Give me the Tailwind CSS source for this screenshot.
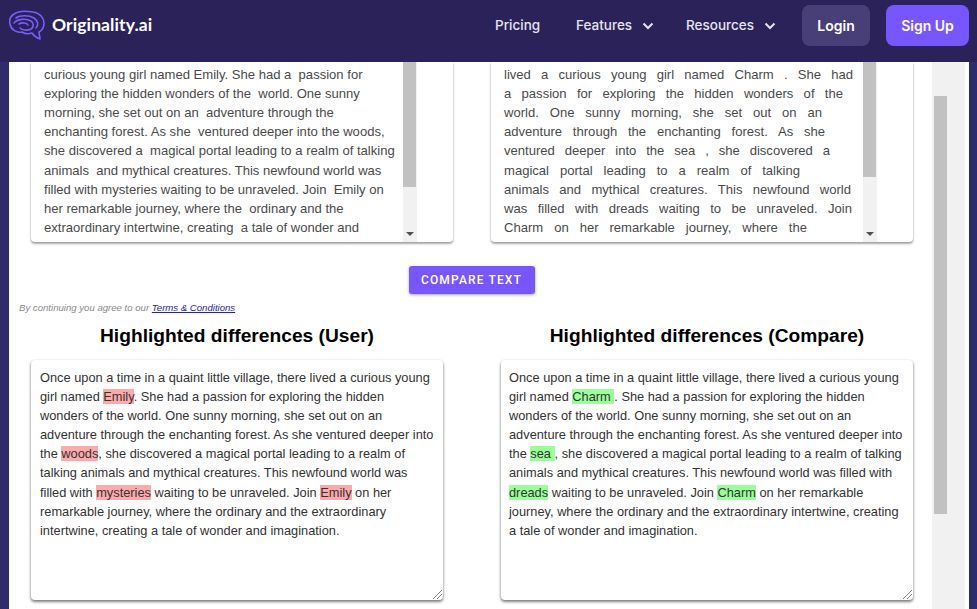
<!DOCTYPE html>
<html lang="en">
<head>
    <meta charset="UTF-8">
    <title>Originality.ai - Text Compare</title>
    <script src="https://cdn.jsdelivr.net/npm/@tailwindcss/browser@4"></script>
</head>
<body class="bg-[#302a6f] h-[609px] overflow-hidden font-['Liberation_Sans',sans-serif]">
    <!-- Nav -->
    <header class="h-[62px] bg-[#2a2258] flex items-start text-white">
        <div class="flex items-center ml-[9px] mt-[10px] gap-[7px] h-[30px]">
            <svg class="w-[36px] h-[30px]" viewBox="0 0 36 30" fill="none" stroke="#7b5cff" stroke-width="1.6" stroke-linecap="round" stroke-linejoin="round">
                <path d="M5 4C9 1 18 1 24 2C31 3 35 8 35 13C35 18 32 21 30 22C30 24 31 27 31 29C28 28 25 26 23 23C20 24 16 24 13 22C8 23 2 20 1 14C0 10 2 6 5 4Z"/>
                <path d="M7 8C11 5 20 5 25 8C29 11 30 15 27 18"/>
                <path d="M5 13C8 9 17 8 22 11C25 13 25 17 22 19C18 21 13 20 11 18"/>
                <path d="M10 14C13 12 18 13 19 15"/>
            </svg>
            <span class="font-['Lato',sans-serif] font-bold text-[17.5px] tracking-[0.1px]">Originality.ai</span>
        </div>
        <nav class="ml-auto flex items-center h-[41px] mt-[5px] text-[13.5px] font-['Inter',sans-serif] font-medium text-[#e6e4f2] mr-[8px]">
            <a class="w-[81px]">Pricing</a>
            <a class="w-[110px] flex items-center">Features
                <svg class="w-[12px] h-[8px] ml-[10px]" viewBox="0 0 12 8" fill="none" stroke="currentColor" stroke-width="2"><path d="M1.5 1.5L6 6L10.5 1.5"/></svg>
            </a>
            <a class="w-[116px] flex items-center">Resources
                <svg class="w-[12px] h-[8px] ml-[10px]" viewBox="0 0 12 8" fill="none" stroke="currentColor" stroke-width="2"><path d="M1.5 1.5L6 6L10.5 1.5"/></svg>
            </a>
            <button class="w-[68px] h-[41px] pb-[1px] rounded-[8px] bg-[#483f78] text-white font-semibold text-[14px] mr-[16px]">Login</button>
            <button class="w-[83px] h-[41px] pb-[1px] rounded-[8px] bg-[#7856ff] text-white font-semibold text-[14px]">Sign Up</button>
        </nav>
    </header>

    <div class="flex ml-[9px] w-[960px] h-[547px]">
        <main class="w-[923px] bg-white overflow-hidden">
            <!-- Input boxes -->
            <div class="flex pl-[22px] gap-[38px]">
                <div class="w-[422px] h-[180px] rounded-b-[4px] bg-white shadow-[0_1px_3px_rgba(0,0,0,0.2),0_2px_2px_rgba(0,0,0,0.25)] flex overflow-hidden pl-[13px]">
                    <div class="w-[359px] -mt-[16.6px] text-[13.07px] leading-[19.2px] text-[#4a4a4a] whitespace-nowrap">
                        <div>Once upon a time in a quaint little village, there lived a</div>
                        <div>curious young girl named Emily. She had a&nbsp; passion for</div>
                        <div>exploring the hidden wonders of the&nbsp; world. One sunny</div>
                        <div>morning, she set out on an&nbsp; adventure through the</div>
                        <div>enchanting forest. As she&nbsp; ventured deeper into the woods,</div>
                        <div>she discovered a&nbsp; magical portal leading to a realm of talking</div>
                        <div>animals&nbsp; and mythical creatures. This newfound world was</div>
                        <div>filled with mysteries waiting to be unraveled. Join&nbsp; Emily on</div>
                        <div>her remarkable journey, where the&nbsp; ordinary and the</div>
                        <div>extraordinary intertwine, creating&nbsp; a tale of wonder and</div>
                    </div>
                    <div class="w-[14px] bg-[#f1f1f1] flex flex-col">
                        <div class="w-[13px] h-[125px] bg-[#c1c1c1]"></div>
                        <div class="mt-auto mb-[6px] mx-auto w-0 h-0 border-x-[4px] border-x-transparent border-t-[4px] border-t-[#505050]"></div>
                    </div>
                </div>
                <div class="w-[422px] h-[180px] rounded-b-[4px] bg-white shadow-[0_1px_3px_rgba(0,0,0,0.2),0_2px_2px_rgba(0,0,0,0.25)] flex overflow-hidden pl-[13px]">
                    <div class="w-[359px] -mt-[16.6px] text-[13.07px] leading-[19.2px] text-[#4a4a4a] whitespace-nowrap [&>div]:[text-align-last:justify]">
                        <div class="w-[349px]">Once upon a time in a quaint little village, there</div>
                        <div class="w-[349px]">lived a curious young girl named Charm . She had</div>
                        <div class="w-[339px]">a passion for exploring the hidden wonders of the</div>
                        <div class="w-[318px]">world. One sunny morning, she set out on an</div>
                        <div class="w-[321px]">adventure through the enchanting forest. As she</div>
                        <div class="w-[326px]">ventured deeper into the sea , she discovered a</div>
                        <div class="w-[296px]">magical portal leading to a realm of talking</div>
                        <div class="w-[347px]">animals and mythical creatures. This newfound world</div>
                        <div class="w-[348px]">was filled with dreads waiting to be unraveled. Join</div>
                        <div class="w-[303px]">Charm on her remarkable journey, where the</div>
                    </div>
                    <div class="w-[14px] bg-[#f1f1f1] flex flex-col">
                        <div class="w-[13px] h-[115px] bg-[#c1c1c1]"></div>
                        <div class="mt-auto mb-[6px] mx-auto w-0 h-0 border-x-[4px] border-x-transparent border-t-[4px] border-t-[#505050]"></div>
                    </div>
                </div>
            </div>

            <div class="flex justify-center mt-[24px] pl-[2px]">
                <button class="w-[126px] h-[28px] rounded-[3px] bg-[#7856ff] text-white text-[12px] font-['Roboto',sans-serif] font-medium tracking-[1.15px] shadow-[0_1px_3px_rgba(0,0,0,0.35)]">COMPARE TEXT</button>
            </div>
            <p class="mt-[8px] ml-[10px] text-[9.6px] leading-[12px] italic text-[#8a8a8a]">By continuing you agree to our <a class="text-[#2222bb] underline">Terms &amp; Conditions</a></p>

            <!-- Results -->
            <div class="flex mt-[10px] pl-[22px] gap-[58px]">
                <section class="w-[412px]">
                    <h2 class="text-center text-[19.2px] leading-[24px] font-bold text-black">Highlighted differences (User)</h2>
                    <div class="relative mt-[12px] h-[240px] rounded-[4px] bg-white shadow-[0_1px_3px_rgba(0,0,0,0.25),0_2px_3px_rgba(0,0,0,0.4)] pt-[8px] pl-[9px] text-[12.8px] leading-[19.1px] text-[#333] whitespace-nowrap">
                        <div>Once upon a time in a quaint little village, there lived a curious young</div>
                        <div>girl named <mark class="bg-[#ffaaaa] text-[#333]">Emily</mark>. She had a passion for exploring the hidden</div>
                        <div>wonders of the world. One sunny morning, she set out on an</div>
                        <div>adventure through the enchanting forest. As she ventured deeper into</div>
                        <div>the <mark class="bg-[#ffaaaa] text-[#333]">woods</mark>, she discovered a magical portal leading to a realm of</div>
                        <div>talking animals and mythical creatures. This newfound world was</div>
                        <div>filled with <mark class="bg-[#ffaaaa] text-[#333]">mysteries</mark> waiting to be unraveled. Join <mark class="bg-[#ffaaaa] text-[#333]">Emily</mark> on her</div>
                        <div>remarkable journey, where the ordinary and the extraordinary</div>
                        <div>intertwine, creating a tale of wonder and imagination.</div>
                        <svg class="absolute right-[1px] bottom-[1px] w-[9px] h-[9px]" viewBox="0 0 9 9" stroke="#666" stroke-width="0.8"><path d="M0 9L9 0M4 9L9 4"/></svg>
                    </div>
                </section>
                <section class="w-[412px]">
                    <h2 class="text-center text-[19.2px] leading-[24px] font-bold text-black">Highlighted differences (Compare)</h2>
                    <div class="relative mt-[12px] h-[240px] rounded-[4px] bg-white shadow-[0_1px_3px_rgba(0,0,0,0.25),0_2px_3px_rgba(0,0,0,0.4)] pt-[8px] pl-[8px] text-[12.8px] leading-[19.1px] text-[#333] whitespace-nowrap">
                        <div>Once upon a time in a quaint little village, there lived a curious young</div>
                        <div>girl named <mark class="bg-[#99ff99] text-[#333]">Charm&nbsp;</mark>. She had a passion for exploring the hidden</div>
                        <div>wonders of the world. One sunny morning, she set out on an</div>
                        <div>adventure through the enchanting forest. As she ventured deeper into</div>
                        <div>the <mark class="bg-[#99ff99] text-[#333]">sea&nbsp;</mark>, she discovered a magical portal leading to a realm of talking</div>
                        <div>animals and mythical creatures. This newfound world was filled with</div>
                        <div><mark class="bg-[#99ff99] text-[#333]">dreads</mark> waiting to be unraveled. Join <mark class="bg-[#99ff99] text-[#333]">Charm</mark> on her remarkable</div>
                        <div>journey, where the ordinary and the extraordinary intertwine, creating</div>
                        <div>a tale of wonder and imagination.</div>
                        <svg class="absolute right-[1px] bottom-[1px] w-[9px] h-[9px]" viewBox="0 0 9 9" stroke="#666" stroke-width="0.8"><path d="M0 9L9 0M4 9L9 4"/></svg>
                    </div>
                </section>
            </div>
        </main>
        <!-- Page scrollbar -->
        <div class="w-[33px] bg-[#f1f1f1] pl-[2px] pt-[34px]">
            <div class="w-[13px] h-[418px] bg-[#c1c1c1]"></div>
        </div>
        <div class="w-[4px] bg-white"></div>
    </div>
</body>
</html>
